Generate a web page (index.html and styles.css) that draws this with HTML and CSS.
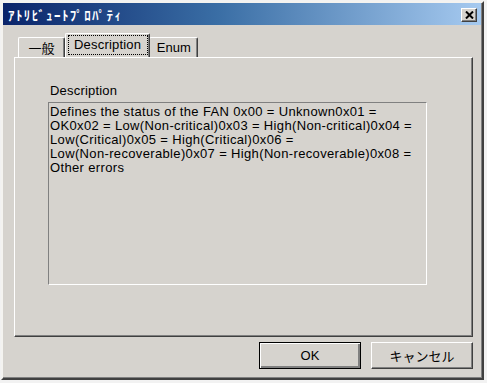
FILE: index.html
```html
<!DOCTYPE html>
<html lang="ja">
<head>
  <meta charset="UTF-8">
  <title>アトリビュートプロパティ</title>
  <link rel="stylesheet" href="styles.css">
</head>
<body>
  <div class="window">
    <div class="titlebar">
      <span class="title">ｱﾄﾘﾋﾞｭｰﾄﾌﾟﾛﾊﾟﾃｨ</span>
      <button class="close-btn" aria-label="閉じる">
        <svg width="9" height="8" viewBox="0 0 9 8">
          <path d="M1 0.5 L8 7.5 M8 0.5 L1 7.5" stroke="#000" stroke-width="2" fill="none"/>
        </svg>
      </button>
    </div>

    <div class="dialog">
      <div class="tabs">
        <div class="tab">一般</div>
        <div class="tab active"><span class="focus">Description</span></div>
        <div class="tab">Enum</div>
      </div>

      <div class="panel">
        <div class="field-label">Description</div>
        <div class="textbox">
          <div>Defines the status of the FAN 0x00 = Unknown0x01 =</div>
          <div>OK0x02 = Low(Non-critical)0x03 = High(Non-critical)0x04 =</div>
          <div>Low(Critical)0x05 = High(Critical)0x06 =</div>
          <div>Low(Non-recoverable)0x07 = High(Non-recoverable)0x08 =</div>
          <div>Other errors</div>
        </div>
      </div>

      <div class="buttons">
        <button class="btn default">OK</button>
        <button class="btn">キャンセル</button>
      </div>
    </div>
  </div>
</body>
</html>
```

FILE: styles.css
```css
* { box-sizing: border-box; }
body {
  margin: 0;
  padding: 1px;
  background: #f2f2f2;
  font-family: "Liberation Sans", "Noto Sans CJK JP", sans-serif;
  font-size: 13px;
  color: #000;
}
.window {
  width: 483px; height: 379px;
  background: #d6d3ce;
  border: 2px solid;
  border-color: #f4f3f0 #404040 #404040 #f4f3f0;
  box-shadow: inset -1px -1px 0 #808080;
  display: flex; flex-direction: column;
}
.titlebar {
  height: 22px;
  margin: 0 1px 0 0;
  display: flex; align-items: center; justify-content: space-between;
  padding: 0 4px 0 5px;
  background: linear-gradient(to right, #0a246a 0%, #3a6ea5 45%, #a6caf0 100%);
}
.title {
  color: #fff;
  font-family: "Noto Sans CJK JP", sans-serif;
  font-weight: 700;
  font-size: 13px;
  letter-spacing: 1.4px;
}
.close-btn {
  width: 16px; height: 14px;
  padding: 0; margin-top: 2px;
  background: #d6d3ce;
  border: 1px solid;
  border-color: #fff #404040 #404040 #fff;
  box-shadow: inset -1px -1px 0 #808080;
  display: flex; align-items: center; justify-content: center;
}
.dialog {
  flex: 1;
  padding: 8px 9px 0 11px;
  display: flex; flex-direction: column;
}
.tabs {
  height: 24px;
  display: flex; align-items: flex-end;
  padding-left: 4px;
}
.tab {
  height: 20px;
  padding: 0 7px;
  border: 1px solid;
  border-bottom: none;
  border-color: #fff #404040 #fff #fff;
  border-radius: 2px 2px 0 0;
  box-shadow: inset -1px 0 0 #808080;
  display: flex; align-items: center;
}
.tab:first-child { width: 47px; justify-content: center; font-family: "Noto Sans CJK JP", sans-serif; }
.tab.active {
  height: 24px;
  margin: 0 -1px 0 0;
  padding: 1px 1px 2px 2px;
  position: relative; z-index: 1;
  background: #d6d3ce;
  letter-spacing: 0.2px;
}
.focus {
  display: flex; align-items: center;
  height: 100%;
  padding: 0 6px 2px 5px;
  border: 1px dotted #000;
}
.tab:last-child { width: 49px; justify-content: center; }
.panel {
  height: 280px;
  border: 1px solid;
  border-color: #fff #404040 #404040 #fff;
  box-shadow: inset -1px -1px 0 #808080;
  padding: 25px 0 0 33px;
}
.field-label { height: 19px; padding-left: 2px; letter-spacing: 0.2px; }
.textbox {
  width: 379px; height: 183px;
  border: 1px solid;
  border-color: #808080 #fff #fff #808080;
  padding: 2px 1px;
  line-height: 14px;
  letter-spacing: 0.35px;
  white-space: nowrap;
}
.buttons {
  display: flex; justify-content: flex-end; gap: 10px;
  margin-top: 5px;
}
.btn {
  width: 102px; height: 27px;
  background: #d6d3ce;
  font-family: "Liberation Sans", "Noto Sans CJK JP", sans-serif;
  font-size: 13px;
  border: 1px solid;
  border-color: #fff #404040 #404040 #fff;
  box-shadow: inset -1px -1px 0 #808080;
}
.btn.default {
  border: 1px solid #000;
  box-shadow: inset 1px 1px 0 #fff, inset -2px -2px 0 #808080;
}
```
